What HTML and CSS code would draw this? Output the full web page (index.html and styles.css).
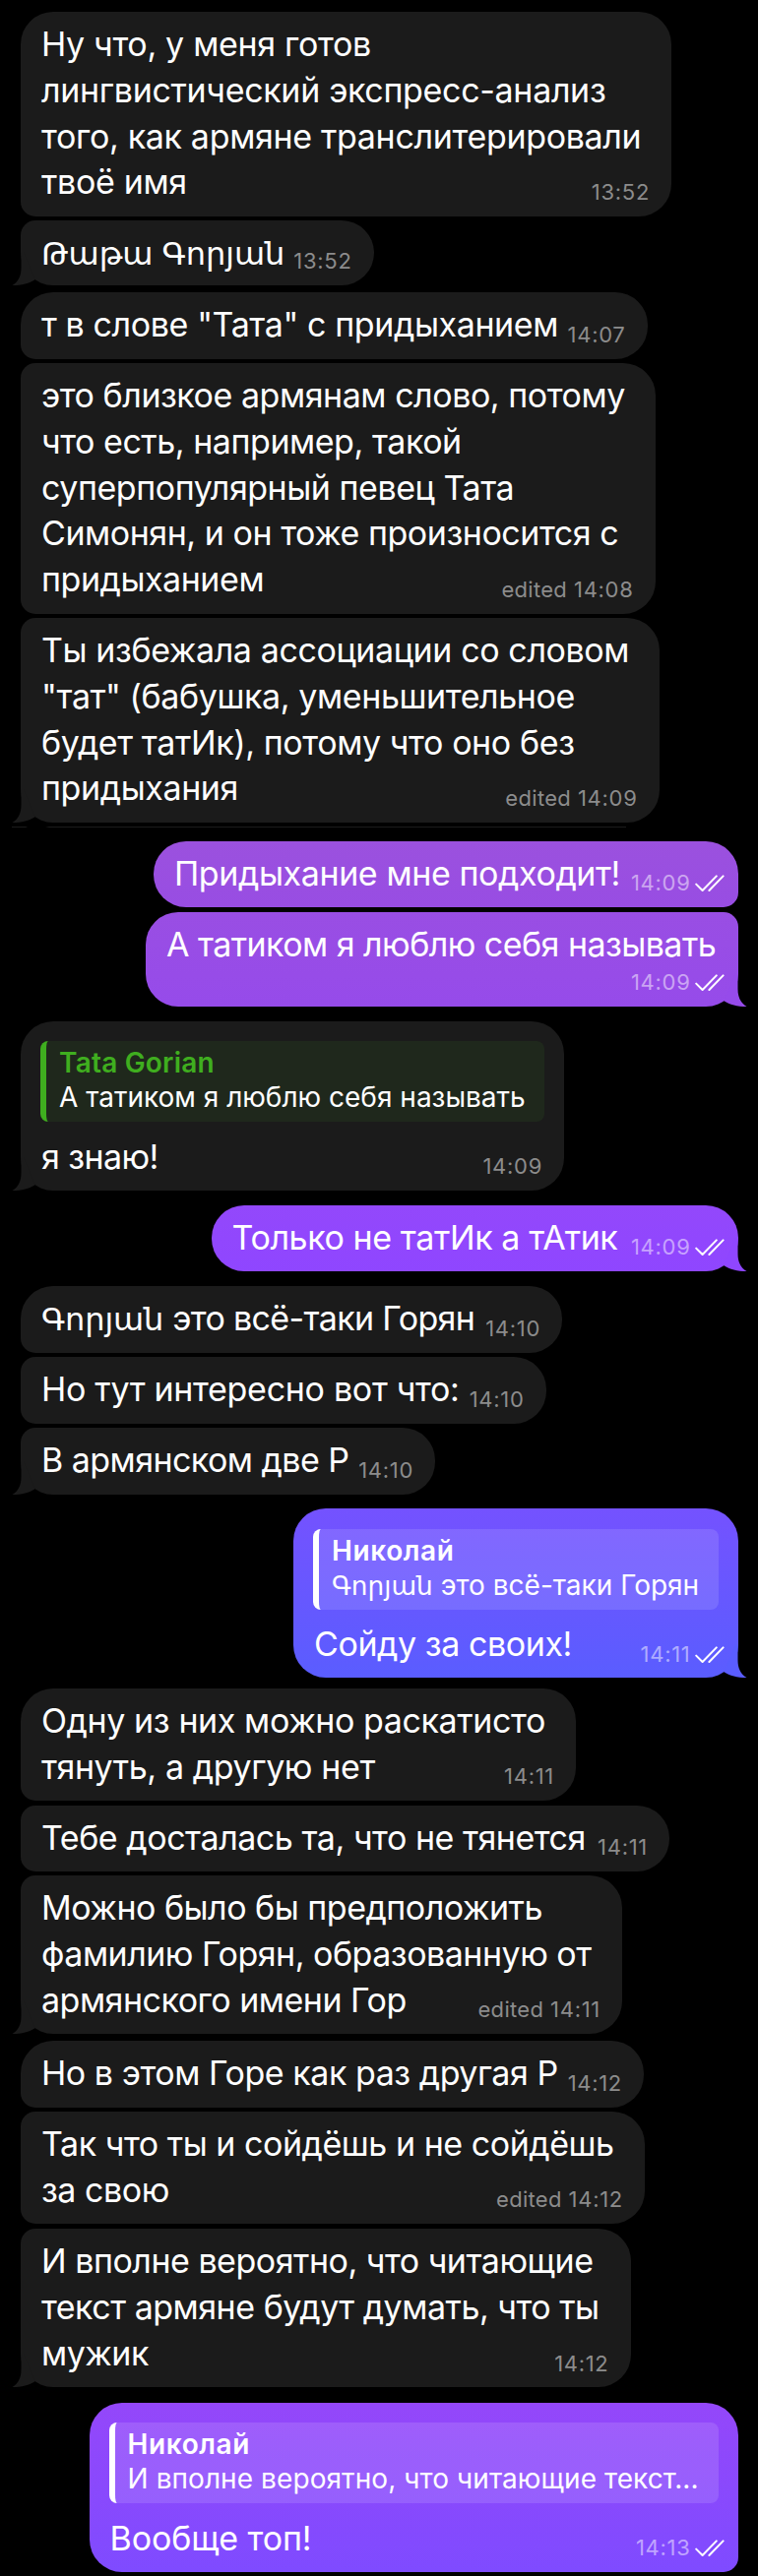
FILE: index.html
```html
<!DOCTYPE html>
<html lang="ru">
<head>
    <meta charset="UTF-8">
    <meta name="viewport" content="width=device-width, initial-scale=1.0">
    <title>Chat</title>
    <link rel="stylesheet" href="styles.css">
</head>
<body>

    <!-- shared icons -->
    <svg class="defs" width="0" height="0">
        <symbol id="checks" viewBox="0 0 30 18">
            <path d="M1.2 9.6 L7.6 16 L21.8 1.4 M14.4 16 L28.6 1.4" fill="none" stroke="#fff" stroke-width="2" stroke-linecap="round" stroke-linejoin="round"/>
        </symbol>
        <symbol id="tail" viewBox="0 0 24 34">
            <path d="M9.5 0 V16 C9.5 24 7 30 0.5 34 C10 34 18 32 23.5 28.2 L12 0 Z"/>
        </symbol>
    </svg>

    <div class="chat">

        <div class="group in">
            <div class="bubble m1">
                <p class="text">Ну что, у меня готов<br>лингвистический экспресс-анализ<br>того, как армяне транслитерировали<br>твоё имя</p>
                <span class="meta">13:52</span>
            </div>
            <div class="bubble m2">
                <p class="text"><span class="hy">Թաթա Գորյան</span></p>
                <span class="meta">13:52</span>
                <svg class="tail"><use href="#tail"/></svg>
            </div>
        </div>

        <div class="group in next">
            <div class="bubble m3">
                <p class="text">т в слове "Тата" с придыханием</p>
                <span class="meta">14:07</span>
            </div>
            <div class="bubble m4">
                <p class="text">это близкое армянам слово, потому<br>что есть, например, такой<br>суперпопулярный певец Тата<br>Симонян, и он тоже произносится с<br>придыханием</p>
                <span class="meta"><span class="edited">edited</span> 14:08</span>
            </div>
            <div class="bubble m5">
                <p class="text">Ты избежала ассоциации со словом<br>"тат" (бабушка, уменьшительное<br>будет татИк), потому что оно без<br>придыхания</p>
                <span class="meta"><span class="edited">edited</span> 14:09</span>
                <svg class="tail"><use href="#tail"/></svg>
            </div>
        </div>

        <div class="seam"></div>

        <div class="group out">
            <div class="bubble m6">
                <p class="text">Придыхание мне подходит!</p>
                <span class="meta">14:09<svg class="checks"><use href="#checks"/></svg></span>
            </div>
            <div class="bubble m7">
                <p class="text">А татиком я люблю себя называть</p>
                <span class="meta">14:09<svg class="checks"><use href="#checks"/></svg></span>
                <svg class="tail"><use href="#tail"/></svg>
            </div>
        </div>

        <div class="group in">
            <div class="bubble m8">
                <div class="quote green">
                    <div class="name">Tata Gorian</div>
                    <div class="quoted">А татиком я люблю себя называть</div>
                </div>
                <p class="text">я знаю!</p>
                <span class="meta">14:09</span>
                <svg class="tail"><use href="#tail"/></svg>
            </div>
        </div>

        <div class="group out">
            <div class="bubble m9">
                <p class="text">Только не татИк а тАтик</p>
                <span class="meta">14:09<svg class="checks"><use href="#checks"/></svg></span>
                <svg class="tail"><use href="#tail"/></svg>
            </div>
        </div>

        <div class="group in">
            <div class="bubble m10">
                <p class="text"><span class="hy">Գորյան</span> это всё-таки Горян</p>
                <span class="meta">14:10</span>
            </div>
            <div class="bubble m11">
                <p class="text">Но тут интересно вот что:</p>
                <span class="meta">14:10</span>
            </div>
            <div class="bubble m12">
                <p class="text">В армянском две Р</p>
                <span class="meta">14:10</span>
                <svg class="tail"><use href="#tail"/></svg>
            </div>
        </div>

        <div class="group out">
            <div class="bubble m13">
                <div class="quote">
                    <div class="name">Николай</div>
                    <div class="quoted"><span class="hy">Գորյան</span> это всё-таки Горян</div>
                </div>
                <p class="text">Сойду за своих!</p>
                <span class="meta">14:11<svg class="checks"><use href="#checks"/></svg></span>
                <svg class="tail"><use href="#tail"/></svg>
            </div>
        </div>

        <div class="group in close">
            <div class="bubble m14">
                <p class="text">Одну из них можно раскатисто<br>тянуть, а другую нет</p>
                <span class="meta">14:11</span>
            </div>
            <div class="bubble m15">
                <p class="text">Тебе досталась та, что не тянется</p>
                <span class="meta">14:11</span>
            </div>
            <div class="bubble m16">
                <p class="text">Можно было бы предположить<br>фамилию Горян, образованную от<br>армянского имени Гор</p>
                <span class="meta"><span class="edited">edited</span> 14:11</span>
                <svg class="tail"><use href="#tail"/></svg>
            </div>
        </div>

        <div class="group in next">
            <div class="bubble m17">
                <p class="text">Но в этом Горе как раз другая Р</p>
                <span class="meta">14:12</span>
            </div>
            <div class="bubble m18">
                <p class="text">Так что ты и сойдёшь и не сойдёшь<br>за свою</p>
                <span class="meta"><span class="edited">edited</span> 14:12</span>
            </div>
            <div class="bubble m19">
                <p class="text">И вполне вероятно, что читающие<br>текст армяне будут думать, что ты<br>мужик</p>
                <span class="meta">14:12</span>
                <svg class="tail"><use href="#tail"/></svg>
            </div>
        </div>

        <div class="group out">
            <div class="bubble m20">
                <div class="quote">
                    <div class="name">Николай</div>
                    <div class="quoted">И вполне вероятно, что читающие текст...</div>
                </div>
                <p class="text">Вообще топ!</p>
                <span class="meta">14:13<svg class="checks"><use href="#checks"/></svg></span>
            </div>
        </div>

    </div>

</body>
</html>
```
FILE: styles.css
```css
* {
    box-sizing: border-box;
}

body {
    margin: 0;
    background: #000;
    color: #fff;
    font-family: Inter, "DejaVu Sans", sans-serif;
}

.defs {
    position: absolute;
}

.chat {
    height: 2618px;
    padding: 12px 20.5px 0 21px;
    overflow: hidden;
}

.group {
    display: flex;
    flex-direction: column;
    gap: 4.4px;
    margin-top: 14.6px;
}

.group:first-child {
    margin-top: 0;
}

.group.next {
    margin-top: 7px;
}

.group.close {
    margin-top: 10.6px;
}

.out {
    align-items: flex-end;
}

.bubble {
    position: relative;
    padding: 10px 20px 10.6px 21px;
    white-space: nowrap;
    --fill: #1b1b1b;
    background: var(--fill);
}

/* corners: big by default, small where two bubbles of a group meet */
.in .bubble {
    border-radius: 15px 33px 33px 15px;
}

.in .bubble:first-child {
    border-top-left-radius: 33px;
}

.in .bubble:last-child {
    border-bottom-left-radius: 33px;
}

.out .bubble {
    border-radius: 33px;
}

.text {
    margin: 0;
    font-size: 34px;
    line-height: 46.8px;
    letter-spacing: -0.4px;
}

.hy {
    font-size: 0.942em;
    letter-spacing: 0;
}

.meta {
    position: absolute;
    right: 22px;
    bottom: 13.8px;
    display: flex;
    font-size: 22px;
    line-height: 22px;
    letter-spacing: 0.7px;
    color: #8c8c8c;
    white-space: pre;
}

.edited {
    letter-spacing: 0.3px;
}

.out .meta {
    right: 14px;
    color: rgba(255, 255, 255, 0.5);
}

.checks {
    width: 30px;
    height: 18px;
    margin: 3px 0 0 4px;
}

.tail {
    position: absolute;
    left: -9.5px;
    bottom: 0;
    width: 24px;
    height: 34px;
    fill: var(--fill);
}

.out .tail {
    left: auto;
    right: -9.5px;
    transform: scaleX(-1);
}

.quote {
    height: 82px;
    margin: 10.4px 0 12.4px -1px;
    padding: 5px 0 0 13px;
    border-left: 6px solid #fff;
    border-radius: 8px;
    background: rgba(255, 255, 255, 0.12);
    font-size: 28px;
    line-height: 35px;
}

.quote.green {
    border-color: #3fae1f;
    background: #1f281c;
}

.quote.green .name {
    color: #3fae1f;
    letter-spacing: 0.2px;
}

.name {
    font-weight: 600;
    letter-spacing: 0.6px;
}

/* stitch line left between the two halves of the history */
.seam {
    width: 624px;
    height: 1.5px;
    margin: 4px 0 -1px -9px;
    background: linear-gradient(90deg, #1b1b1b 14px, #000 16px, #000 34px, #1b1b1b 38px);
}

.seam + .group {
    margin-top: 14.6px;
}

.m1 { width: 661px; }
.m1 .text { letter-spacing: -0.33px; }

.m2 { width: 358.5px; height: 66px; }

.m3 { width: 636.5px; }

.m4 { width: 644.5px; }
.m4 .text { letter-spacing: -0.46px; }

.m5 { width: 648.5px; }
.m5 .text { letter-spacing: -0.4px; }

.out .m6 {
    width: 593.5px;
    border-bottom-right-radius: 15px;
    background: linear-gradient(#9b51de, #984de3);
}
.m6 .text { letter-spacing: -0.4px; }

.out .m7 {
    width: 601.5px;
    height: 96.7px;
    border-top-right-radius: 15px;
    --fill: #964bea;
    background: linear-gradient(#994ee3, #964bea);
}
.m7 .text { letter-spacing: -0.55px; }

.m8 { width: 552px; }
.m8 .text { letter-spacing: -0.6px; }

.m9 {
    width: 535px;
    --fill: #8f46ff;
    background: linear-gradient(#9348fb, #8f46ff);
}
.m9 .text { letter-spacing: -0.4px; }

.m10 { width: 550px; }
.m10 .text { letter-spacing: -0.65px; }
.m10 .text .hy { letter-spacing: -0.1px; }

.m11 { width: 533.5px; }
.m11 .text { letter-spacing: -0.3px; }

.m12 { width: 421px; }
.m12 .text { letter-spacing: -0.55px; }

.m13 {
    width: 451.5px;
    --fill: #5a5dff;
    background: linear-gradient(#7452ff, #5a5dff);
}
.m13 .text { letter-spacing: -0.42px; }

.m14 { width: 564px; }
.m14 .text { letter-spacing: -0.4px; }

.m15 { width: 659px; }
.m15 .text { letter-spacing: -0.46px; }

.m16 { width: 611px; }
.m16 .text { letter-spacing: -0.5px; }

.m17 { width: 633px; }
.m17 .text { letter-spacing: -0.46px; }

.m18 { width: 634px; }
.m18 .text { letter-spacing: -0.46px; }

.m19 { width: 619.5px; margin-top: 0.7px; }
.m19 .text { letter-spacing: -0.49px; }

.out .m20 {
    width: 659px;
    margin-top: 1px;
    border-bottom-right-radius: 15px;
    background: linear-gradient(#9447fa, #7f4bff);
}
.m20 .text { letter-spacing: -0.1px; }
.m20 .quoted { letter-spacing: 0.08px; }
```
